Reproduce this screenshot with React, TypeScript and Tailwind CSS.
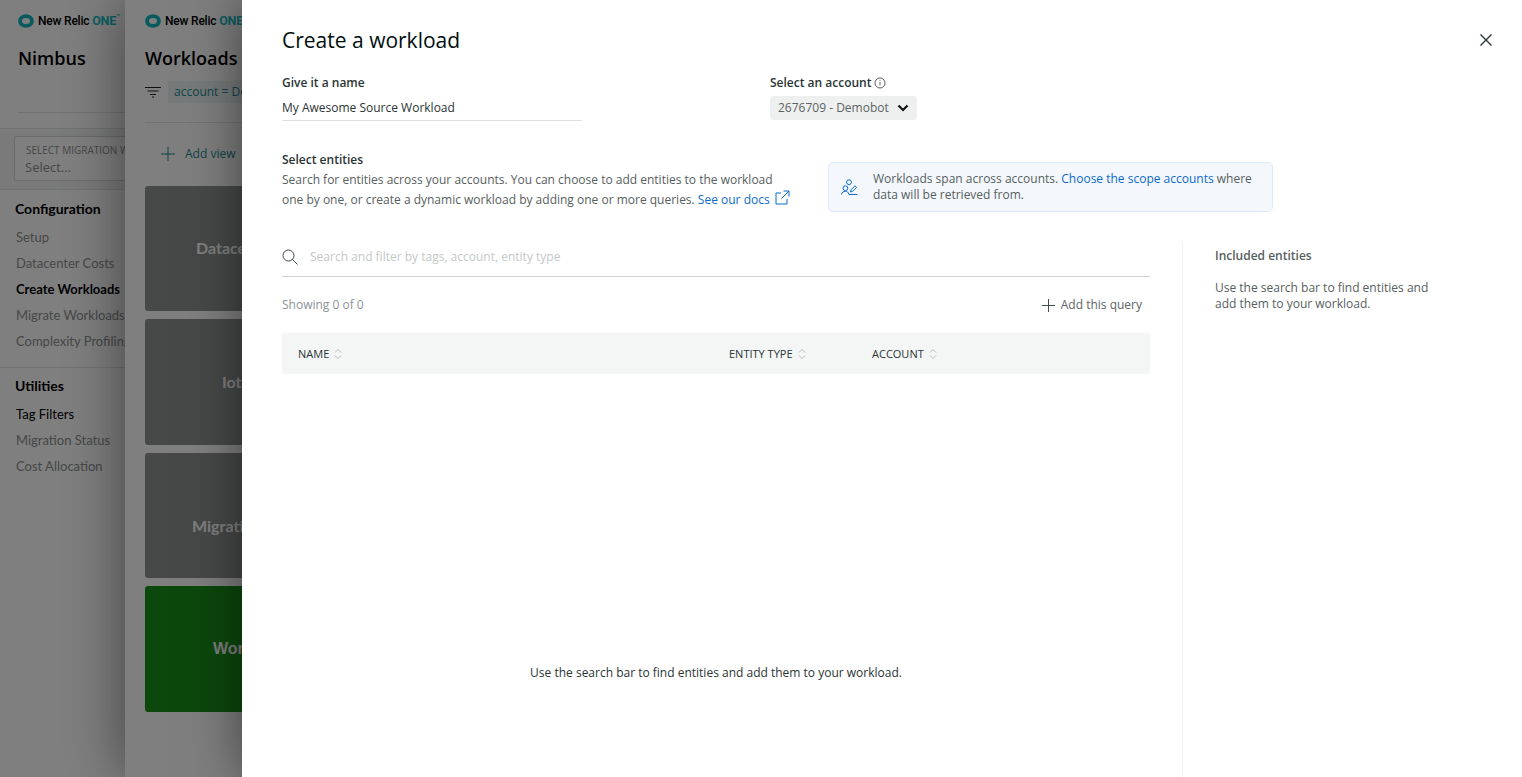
const sans = "font-['Open_Sans',sans-serif]";

function SortIcon() {
  return (
    <svg width="8" height="12" viewBox="0 0 8 12" fill="none" stroke="#b4bcbc" strokeWidth="1">
      <path d="M1 4.5 4 1.5l3 3" />
      <path d="M1 7.5l3 3 3-3" />
    </svg>
  );
}

function Logo() {
  return (
    <div className="flex items-center gap-[4px] whitespace-nowrap">
      <svg width="16" height="14" viewBox="0 0 16 14" className="flex-shrink-0">
        <ellipse cx="8" cy="7" rx="6" ry="4.8" fill="none" stroke="#12b4bc" strokeWidth="3.8" />
      </svg>
      <span className="font-['Roboto',sans-serif] text-[12px] font-medium tracking-[-0.2px] text-black">
        New Relic <span className="text-[#16c0c8] text-[12.5px] font-bold">ONE</span>
        <span className="text-[#16c0c8] text-[7px] align-top">™</span>
      </span>
    </div>
  );
}

function NavGroup({ title, items, active, dark }: { title: string; items: string[]; active?: string; dark?: string }) {
  return (
    <div>
      <div className="pl-[15px] text-[14px] leading-[20px] font-bold text-black">{title}</div>
      <div className="mt-[5px] flex flex-col pl-[16px]">
        {items.map((item) => (
          <div
            key={item}
            className={`h-[26px] leading-[26px] text-[13px] whitespace-nowrap ${
              item === active ? "font-bold text-black" : item === dark ? "text-black" : "text-[#8c9090]"
            }`}
          >
            {item}
          </div>
        ))}
      </div>
    </div>
  );
}

function LeftPanel() {
  return (
    <aside className="w-[125px] h-full flex-shrink-0 overflow-hidden bg-white font-['Lato',sans-serif]">
      <div className="w-[240px]">
        <div className="h-[113px] ml-[18px] pt-[12px] border-b border-[#e3e4e4]">
          <Logo />
          <div className={`${sans} mt-[12px] text-[18px] leading-[30px] font-semibold text-black`}>Nimbus</div>
        </div>
        <div className="mt-[15px] h-[62px] px-[14px] pt-[7px] bg-[#f4f5f5] border-y border-[#e3e4e4]">
          <div className={`${sans} h-[45px] border border-[#d5d7d7] rounded-[2px] bg-white pl-[11px] pt-[6px]`}>
            <div className="text-[10px] leading-[14px] text-[#8c9090] whitespace-nowrap">SELECT MIGRATION WORKLOAD</div>
            <div className="mt-[2px] -ml-[1px] text-[13px] leading-[17px] text-[#8c9090]">Select...</div>
          </div>
        </div>
        <div className="pt-[9px]">
          <NavGroup
            title="Configuration"
            active="Create Workloads"
            items={["Setup", "Datacenter Costs", "Create Workloads", "Migrate Workloads", "Complexity Profiling"]}
          />
        </div>
        <div className="mt-[13px] border-t border-[#e3e4e4] pt-[8px]">
          <NavGroup title="Utilities" dark="Tag Filters" items={["Tag Filters", "Migration Status", "Cost Allocation"]} />
        </div>
      </div>
    </aside>
  );
}

function Card({ label, className }: { label: string; className: string }) {
  return (
    <div className={`${className} flex-shrink-0 rounded-[3px] flex items-center text-[16px] font-bold text-white whitespace-nowrap`}>
      {label}
    </div>
  );
}

function MiddlePanel() {
  return (
    <section className={`${sans} relative w-[117px] h-full flex-shrink-0 overflow-hidden bg-white shadow-[0_0_60px_rgba(0,0,0,0.5)]`}>
      <div className="w-[360px] px-[20px]">
        <div className="pt-[12px]">
          <Logo />
        </div>
        <div className="mt-[12px] text-[18px] leading-[30px] font-semibold text-black">Workloads</div>
        <div className="mt-[8px] flex items-center gap-[7px] h-[22px]">
          <svg width="16" height="12" viewBox="0 0 16 12" stroke="#222" strokeWidth="1">
            <path d="M0 1.5h16M2.5 5h11M5 8.5h6M7 11h2" />
          </svg>
          <div className="h-[22px] w-[120px] bg-[#eef5f5] rounded-[2px] pl-[6px] text-[12px] leading-[22px] text-[#1b8a91] whitespace-nowrap">
            account = Demobot
          </div>
        </div>
        <div className="mt-[19px] border-t border-[#e3e4e4]" />
        <div className="mt-[19px] h-[24px] flex items-center gap-[10px] pl-[16px] text-[12px] text-[#1b8a91]">
          <svg width="14" height="14" viewBox="0 0 14 14" stroke="#1b8a91" strokeWidth="1">
            <path d="M7 0v14M0 7h14" />
          </svg>
          Add view
        </div>
        <div className="mt-[20px] flex flex-col gap-[8px]">
          <Card className="h-[125px] pl-[51px] bg-[#8e9292] font-['Lato',sans-serif]" label="Datacenter" />
          <Card className="h-[126px] pl-[77px] bg-[#8e9292] font-['Lato',sans-serif]" label="Iot" />
          <Card className="h-[125px] pl-[47px] pt-[22px] bg-[#8e9292] font-['Lato',sans-serif]" label="Migration" />
          <Card className="h-[126px] pl-[68px] bg-[#189018] font-['Liberation_Sans',sans-serif]" label="Workloads" />
        </div>
      </div>
    </section>
  );
}

function ColumnHead({ label, className }: { label: string; className: string }) {
  return (
    <div className={`${className} flex items-center gap-[5px] pt-[1px] text-[11px] text-[#2a3434]`}>
      {label}
      <SortIcon />
    </div>
  );
}

function Drawer() {
  return (
    <main className={`${sans} relative z-20 w-[1280px] h-full flex-shrink-0 bg-white pl-[40px] flex flex-col text-[#566060] shadow-[0_0_50px_rgba(0,0,0,0.5)]`}>
      <h1 className="mt-[25px] text-[21px] leading-[30px] text-[#000e0e]">Create a workload</h1>
      <button className="absolute left-[1237px] top-[33px]">
        <svg width="14" height="14" viewBox="0 0 14 14" stroke="#293338" strokeWidth="1.4" fill="none">
          <path d="M1.5 1.5l11 11M12.5 1.5l-11 11" />
        </svg>
      </button>

      <div className="mt-[20px] flex">
        <div className="w-[488px]">
          <div className="text-[12px] leading-[16px] font-semibold text-[#2a3434]">Give it a name</div>
          <div className="mt-[9px] w-[300px] h-[21px] border-b border-[#dfe1e1] text-[12px] leading-[16px] text-[#2a3434]">
            My Awesome Source Workload
          </div>
        </div>
        <div>
          <div className="flex items-center gap-[2px] text-[12px] leading-[16px] font-semibold text-[#2a3434]">
            Select an account
            <svg width="12" height="12" viewBox="0 0 12 12" fill="none" stroke="#464e4e" strokeWidth="0.9">
              <circle cx="6" cy="6" r="5" />
              <path d="M6 5.2v3.2M6 3.4v.9" />
            </svg>
          </div>
          <div className="mt-[5px] w-[147px] h-[24px] rounded-[3px] bg-[#eef0f0] pl-[8px] flex items-center text-[12px] text-[#5c6464]">
            2676709 - Demobot
            <svg className="ml-[8px]" width="12" height="8" viewBox="0 0 12 8" fill="none" stroke="#111" strokeWidth="2.2">
              <path d="M1.5 1.5 6 6l4.5-4.5" />
            </svg>
          </div>
        </div>
      </div>

      <div className="mt-[31px] flex">
        <div className="w-[546px]">
          <div className="text-[12px] leading-[16px] font-semibold text-[#2a3434]">Select entities</div>
          <p className="mt-[2px] text-[12px] leading-[20px] whitespace-nowrap">
            Search for entities across your accounts. You can choose to add entities to the workload
            <br />
            one by one, or create a dynamic workload by adding one or more queries.{" "}
            <span className="text-[#0b6acb]">See our docs</span>
            <svg className="inline ml-[5px] -mt-[6px]" width="15" height="15" viewBox="0 0 15 15" fill="none" stroke="#0b6acb" strokeWidth="1">
              <path d="M6 3H1v11h11V9M8.5 1H14v5.5M14 1 6.5 8.5" />
            </svg>
          </p>
        </div>
        <div className="mt-[10px] w-[445px] h-[50px] rounded-[5px] border border-[#dcebfb] bg-[#f4f8fd] flex items-center">
          <svg className="ml-[12px] flex-shrink-0" width="17" height="17" viewBox="0 0 17 17" fill="none" stroke="#0b6acb" strokeWidth="1">
            <circle cx="8" cy="3.2" r="2.4" />
            <circle cx="4.4" cy="9.2" r="2.4" />
            <path d="M0.5 15.5c.5-2.2 2-3.2 3.8-3.2s3.2.9 3.7 3.2" />
            <path d="M9.5 12.8l.5-2 4-4 1.6 1.6-4 4z" />
            <path d="M8 15.5h8.5" />
          </svg>
          <p className="ml-[15px] text-[12px] leading-[16px] whitespace-nowrap">
            Workloads span across accounts. <span className="text-[#0b6acb]">Choose the scope accounts</span> where
            <br />
            data will be retrieved from.
          </p>
        </div>
      </div>

      <div className="mt-[34px] flex flex-1 min-h-0">
        <div className="w-[868px] flex-shrink-0 flex flex-col pb-[96px]">
          <div className="h-[31px] border-b border-[#cfd1d1] flex items-start gap-[12px] pt-[3px]">
            <svg width="16" height="16" viewBox="0 0 16 16" fill="none" stroke="#3a4444" strokeWidth="1" className="flex-shrink-0">
              <circle cx="6.5" cy="6.5" r="5.5" />
              <path d="M10.5 10.5l5 5" />
            </svg>
            <span className="text-[12px] leading-[16px] text-[#c4c8c8]">Search and filter by tags, account, entity type</span>
          </div>
          <div className="mt-[16px] h-[24px] flex items-center justify-between pr-[8px] text-[12px]">
            <span className="text-[#8c9494]">Showing 0 of 0</span>
            <span className="flex items-center gap-[6px] text-[#5c6464]">
              <svg width="13" height="13" viewBox="0 0 13 13" stroke="#464e4e" strokeWidth="1">
                <path d="M6.5 0v13M0 6.5h13" />
              </svg>
              Add this query
            </span>
          </div>
          <div className="mt-[16px] h-[41px] bg-[#f4f5f5] flex items-center">
            <ColumnHead label="NAME" className="w-[447px] pl-[16px]" />
            <ColumnHead label="ENTITY TYPE" className="w-[143px]" />
            <ColumnHead label="ACCOUNT" className="" />
          </div>
          <div className="flex-1 flex items-end justify-center text-[12px] leading-[16px] text-[#2a3434]">
            Use the search bar to find entities and add them to your workload.
          </div>
        </div>
        <div className="ml-[32px] -mt-[3px] border-l border-[#f0f1f1] pl-[32px] w-[300px] text-[12px] leading-[16px]">
          <div className="mt-[5px] font-semibold">Included entities</div>
          <p className="mt-[16px] whitespace-nowrap">
            Use the search bar to find entities and
            <br />
            add them to your workload.
          </p>
        </div>
      </div>
    </main>
  );
}

export default function App() {
  return (
    <div className="relative h-screen w-full overflow-hidden flex">
      <LeftPanel />
      <MiddlePanel />
      {/* dim layer over the pages behind the drawer */}
      <div className="absolute inset-0 z-10 bg-black/50" />
      <Drawer />
    </div>
  );
}
